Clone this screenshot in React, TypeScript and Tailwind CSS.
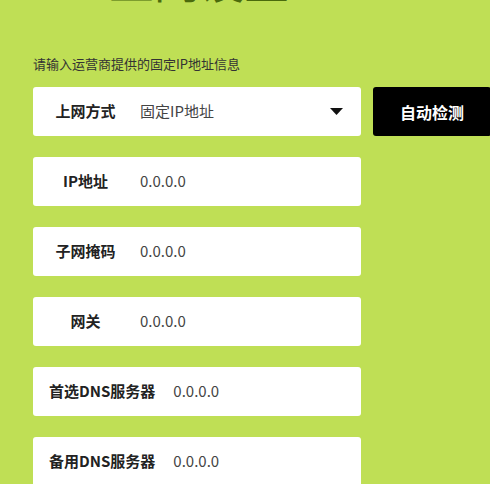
import React from "react";

const rows: { label: string; value: string }[] = [
  { label: "IP地址", value: "0.0.0.0" },
  { label: "子网掩码", value: "0.0.0.0" },
  { label: "网关", value: "0.0.0.0" },
  { label: "首选DNS服务器", value: "0.0.0.0" },
  { label: "备用DNS服务器", value: "0.0.0.0" },
];

function Field({ label, value, children }: { label: string; value: string; children?: React.ReactNode }) {
  return (
    <div className="w-[328px] h-[49px] bg-white rounded-[3px] flex items-center shrink-0">
      <div className="min-w-[107px] pl-4 pr-[18px] text-center font-bold text-[15px] text-[#222] whitespace-nowrap">{label}</div>
      <div className="text-[15px] text-[#444] whitespace-nowrap">{value}</div>
      {children}
    </div>
  );
}

export default function App() {
  return (
    <div
      className="w-[490px] h-[484px] bg-[#bfdf55] overflow-hidden"
      style={{ fontFamily: '"Noto Sans CJK SC", "Noto Sans", sans-serif' }}
    >
      <div className="mt-[-43px] h-[46px] leading-[46px] pl-[109px] text-[45px] text-[#4a6a0c] whitespace-nowrap">
        上网设置
      </div>
      <div className="mt-[53px] pl-[33px] h-[16px] leading-[16px] text-[13px] text-[#333] whitespace-nowrap">
        请输入运营商提供的固定IP地址信息
      </div>
      <div className="mt-[15px] pl-[33px] flex flex-col gap-[21px]">
        <div className="flex items-center">
          <Field label="上网方式" value="固定IP地址">
            <svg className="ml-auto mr-[18px]" width="13" height="7" viewBox="0 0 13 7">
              <polygon points="0,0 13,0 6.5,7" fill="#111" />
            </svg>
          </Field>
          <div className="ml-[12px] w-[118px] h-[49px] shrink-0 bg-black rounded-[3px] flex items-center justify-center text-white font-bold text-[16px] whitespace-nowrap">
            自动检测
          </div>
        </div>
        {rows.map((r) => (
          <Field key={r.label} label={r.label} value={r.value} />
        ))}
      </div>
    </div>
  );
}
